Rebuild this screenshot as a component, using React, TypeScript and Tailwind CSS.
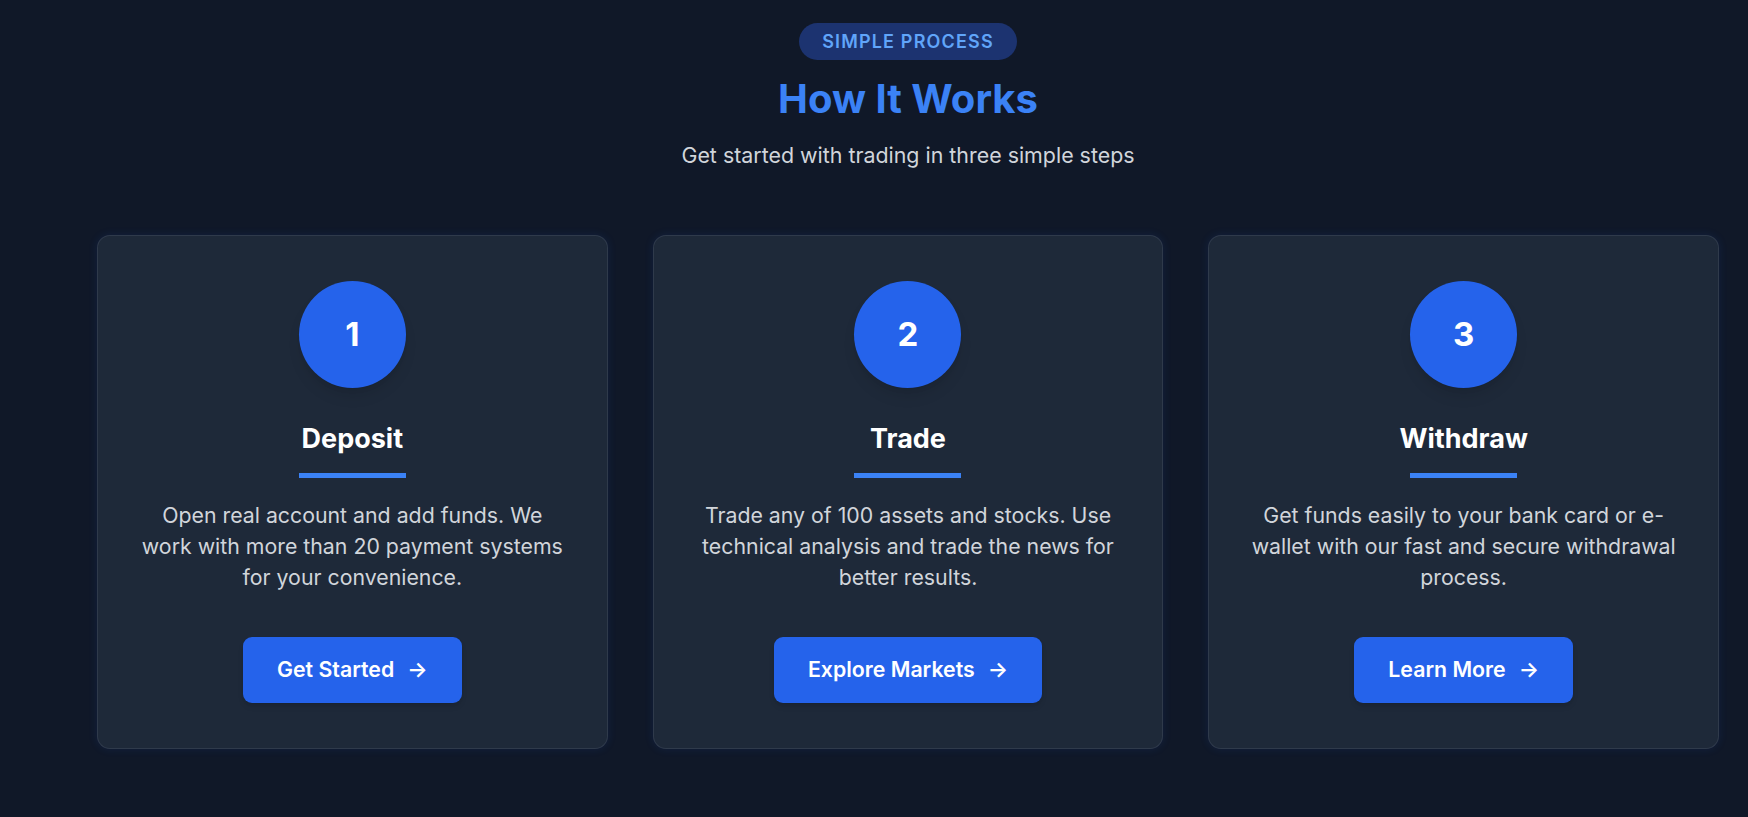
const steps = [
  {
    num: '1',
    title: 'Deposit',
    text: 'Open real account and add funds. We work with more than 20 payment systems for your convenience.',
    cta: 'Get Started',
  },
  {
    num: '2',
    title: 'Trade',
    text: 'Trade any of 100 assets and stocks. Use technical analysis and trade the news for better results.',
    cta: 'Explore Markets',
  },
  {
    num: '3',
    title: 'Withdraw',
    text: 'Get funds easily to your bank card or e-wallet with our fast and secure withdrawal process.',
    cta: 'Learn More',
  },
];

function StepCard({ num, title, text, cta }: (typeof steps)[number]) {
  return (
    <div className="flex flex-col items-center rounded-[13px] border border-[#364153]/70 bg-[#1e2939] px-[40px] py-[45px] text-center shadow-[0_0_10px_rgba(37,99,235,0.12)]">
      {/* step number */}
      <div className="mb-[33px] flex h-[107px] w-[107px] items-center justify-center rounded-full bg-[#2563eb] text-[33px] font-bold text-white shadow-lg">
        {num}
      </div>
      <h3 className="mb-[16px] text-[27px] leading-[35.7px] font-bold text-white">{title}</h3>
      <div className="mb-[22px] h-[5px] w-[107px] bg-[#3b82f6]" />
      <p className="mb-[44px] text-[21.3px] leading-[31.2px] text-[#d1d5db]">{text}</p>
      <button
        type="button"
        className="flex h-[66px] items-center rounded-[9px] bg-[#2563eb] px-[34px] text-[21.3px] font-semibold text-white shadow-md"
      >
        {cta}
        <span className="ml-[13px]" aria-hidden="true">
          →
        </span>
      </button>
    </div>
  );
}

export default function App() {
  return (
    <div className="min-h-[817px] bg-[#101828] pt-[23px] pr-[29px] pb-[70px] pl-[97px] font-['Inter','Liberation_Sans',sans-serif]">
      <div className="flex flex-col items-center">
        <span className="mb-[17px] rounded-full bg-[#1c3370] px-[23px] py-[5px] text-[18px] leading-[27px] font-semibold tracking-[0.065em] text-[#60a5fa] uppercase">
          Simple Process
        </span>
        <h2 className="mb-[18px] text-[40px] leading-[44.6px] font-bold text-[#3b82f6]">How It Works</h2>
        <p className="mb-[64px] text-[21.4px] leading-[31.2px] text-[#d1d5db]">
          Get started with trading in three simple steps
        </p>
      </div>

      <div className="grid grid-cols-3 gap-[45px]">
        {steps.map((s) => (
          <StepCard key={s.num} {...s} />
        ))}
      </div>
    </div>
  );
}
